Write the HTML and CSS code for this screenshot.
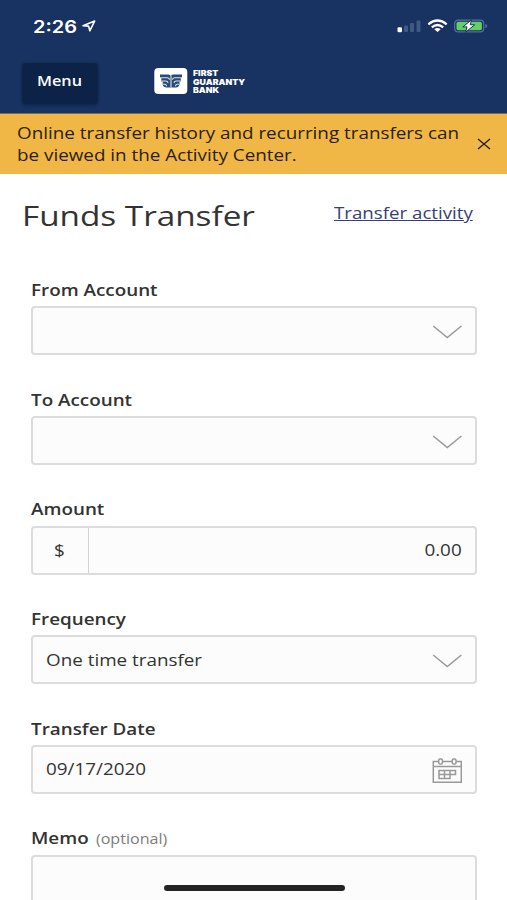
FILE: index.html
```html
<!DOCTYPE html>
<html lang="en">
<head>
<meta charset="utf-8">
<title>Funds Transfer</title>
<link rel="stylesheet" href="styles.css">
</head>
<body>
<div class="screen">
  <header class="header">
    <div class="status">
      <span class="time wide">2:26</span>
      <svg class="location" width="14" height="12" viewBox="0 0 14 12"><path d="M1 5.7 12.7 1 7.8 10.8 6.6 6.1Z" fill="none" stroke="#fff" stroke-width="1.6" stroke-linejoin="round"/></svg>
      <svg class="indicators" width="94" height="16" viewBox="0 0 94 16">
        <rect x="1.500" y="9.300" width="4.500" height="5" rx="1.200" fill="#fff"/>
        <g fill="#3f5985"><rect x="8" y="7.500" width="4" height="6.500" rx="1"/><rect x="14" y="5" width="4" height="9" rx="1"/><rect x="20.500" y="2.500" width="4" height="11.500" rx="1"/></g>
        <g fill="none" stroke="#fff" stroke-width="2.300"><path d="M32.300 6.300Q41.500-1.300 50.700 6.300"/><path d="M35.800 9.300Q41.500 4.700 47.200 9.300"/></g>
        <path d="M38.300 11.300Q41.500 8.900 44.700 11.300L41.500 14Z" fill="#fff"/>
        <g transform="translate(0 1)">
          <rect x="58.700" y="1.200" width="29" height="11.600" rx="3.300" fill="none" stroke="#57709a" stroke-width="1.200"/>
          <path d="M89.300 5v4.200q2-.6 2-2.100t-2-2.100Z" fill="#57709a"/>
          <rect x="60.500" y="2.800" width="25.400" height="8.400" rx="1.800" fill="#62d067"/>
          <path d="M75.500.9 66.800 7.900h4.200l-1.300 5.200 9-7.300h-4.400Z" fill="#fff" stroke="#183261" stroke-width="1"/>
        </g>
      </svg>
    </div>
    <div class="nav">
      <button class="menu"><span class="wide">Menu</span></button>
      <div class="brand">
        <svg width="34" height="28" viewBox="0 0 34 28">
          <rect x=".3" y="1" width="33" height="26" rx="4" fill="#fff"/>
          <path d="M6 7.500h8.500q2 0 2.300 1.500Q17.100 7.500 19 7.500H28V11h-1.200v3.500h-1.300v3.300q-.8 2.700-3.500 2.700h-9.500Q9.500 20.500 8.700 17.800V14.500H7.300V11H6Z" fill="#294b77"/>
          <path d="M6 10.700h7.500q2 .2 2 2M7.500 14H12q2 .2 2 2M9 17.200h2q1.500.2 1.500 2M28 10.700h-7.500q-2 .2-2 2M26.500 14H22q-2 .2-2 2M25 17.200h-2q-1.500.2-1.500 2M17 8.500v12" fill="none" stroke="#dce5ed" stroke-width="1.100"/>
        </svg>
        <div class="brand-name wide">FIRST<br>GUARANTY<br>BANK</div>
      </div>
    </div>
  </header>
  <div class="notice">
    <p class="wide">Online transfer history and recurring transfers can<br>be viewed in the Activity Center.</p>
    <svg class="close" width="14" height="12" viewBox="0 0 14 12"><path d="M1 1 13 11M13 1 1 11" stroke="#2b230f" stroke-width="1.500"/></svg>
  </div>
  <main>
    <div class="title-row">
      <h1 class="title wide">Funds Transfer</h1>
      <a class="activity wide" href="#">Transfer activity</a>
    </div>
    <form class="fields">
      <div class="field">
        <label class="wide">From Account</label>
        <div class="box"><svg class="chevron" width="30" height="14" viewBox="0 0 30 14"><path d="M1.200 1 15.300 12.500 29.400 1"/></svg></div>
      </div>
      <div class="field">
        <label class="wide">To Account</label>
        <div class="box"><svg class="chevron" width="30" height="14" viewBox="0 0 30 14"><path d="M1.200 1 15.300 12.500 29.400 1"/></svg></div>
      </div>
      <div class="field">
        <label class="wide">Amount</label>
        <div class="box amount"><span class="currency"><span class="wide">$</span></span><span class="figure wide">0.00</span></div>
      </div>
      <div class="field">
        <label class="wide">Frequency</label>
        <div class="box"><span class="wide">One time transfer</span><svg class="chevron" width="30" height="14" viewBox="0 0 30 14"><path d="M1.200 1 15.300 12.500 29.400 1"/></svg></div>
      </div>
      <div class="field">
        <label class="wide">Transfer Date</label>
        <div class="box"><span class="wide">09/17/2020</span>
          <svg class="calendar" width="30" height="26" viewBox="0 0 30 26"><path d="M6.500 3.500H1.300V24.300H29.300V3.500H24M10.500 3.500H20M1.300 8.500H29.300M7 12.500H23.500V16.500H18V20.500H7ZM7 16.500H18M12.500 12.500V20.500M18 12.500V16.500"/><rect x="6.700" y="1" width="3.700" height="5" rx="1.300"/><rect x="20.300" y="1" width="3.700" height="5" rx="1.300"/></svg>
        </div>
      </div>
      <div class="field">
        <label class="wide">Memo <small>(optional)</small></label>
        <div class="box memo"></div>
      </div>
    </form>
  </main>
  <div class="home-bar"></div>
</div>
</body>
</html>
```
FILE: styles.css
```css
* { box-sizing: border-box; }
body { margin: 0; font-family: "Open Sans", sans-serif; font-size: 16px; color: #333; background: #fff; }
.screen { position: relative; height: 900px; overflow: hidden; }
/* Extended letterforms: text keeps its height and widens from its left edge. */
.wide { display: inline-block; white-space: nowrap; transform: scaleX(1.177); transform-origin: left center; }

.header { height: 114px; background: #183261; border-bottom: 1px solid #756f58; color: #fff; }
.status { display: flex; align-items: center; height: 52px; padding: 0 17px 0 33px; }
.time { width: 49px; padding-top: 1px; font: 600 17px/20px Inter, sans-serif; }
.indicators { margin-left: auto; }
.nav { display: flex; padding: 11px 0 0 22px; }
.menu { width: 76px; height: 41px; padding: 0 0 5px 15px; border: 0; border-radius: 4px; background: #0d2247; box-shadow: 0 1px 3px #0d2247; color: #fff; font: 600 14px/20px "Open Sans", sans-serif; text-align: left; }
.menu .wide { transform: scaleX(1.16); }
.brand { display: flex; margin: 4px 0 0 56px; gap: 4.500px; }
.brand-name { padding-top: 2px; font: 900 8.200px/8.700px Inter, sans-serif; transform: scaleX(1.07); }

.notice { display: flex; justify-content: space-between; height: 60px; padding: 8px 16px 0 17px; background: #f0b746; color: #2b210c; }
.notice p { margin: 0; line-height: 22px; }
.close { margin-top: 16px; }

.title-row { display: flex; height: 103px; padding: 21px 34px 0 21.500px; justify-content: space-between; }
.title { margin: 0; font-size: 28px; font-weight: 400; line-height: 40px; transform: scaleX(1.188); }
.activity { height: 24px; margin-top: 6px; line-height: 24px; color: #35407a; transform: scaleX(1.168); transform-origin: right center; }

.fields { padding: 0 30px 0 31px; }
.field { height: 109.65px; }
.field label { display: block; height: 29.400px; font-weight: 600; line-height: 26px; }
.field small { margin-left: 2px; font-size: 13.700px; font-weight: 400; color: #7d7d7d; }
.box { display: flex; align-items: center; height: 49px; padding: 0 13px; border: 2px solid #dcdcdc; border-radius: 4px; background: #fcfcfc; }
.box > .wide { margin-top: 0; }
.chevron, .calendar { margin-left: auto; fill: none; stroke: #999; stroke-width: 1.500; }
.chevron { margin-top: 3px; }
.calendar { margin-top: 3px; }
.amount { padding-left: 0; }
.currency { display: flex; align-items: center; width: 56px; height: 100%; padding: 0 0 0 21px; border-right: 1px solid #d4d4d4; }
.figure { margin-left: auto; transform-origin: right center; }
.memo { height: 70px; }
.home-bar { position: absolute; left: 164px; top: 885px; width: 181px; height: 6px; border-radius: 3px; background: #242424; }
```
